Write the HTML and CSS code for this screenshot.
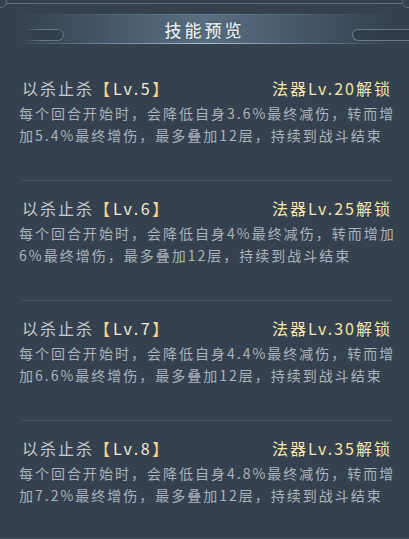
FILE: index.html
```html
<!DOCTYPE html>
<html lang="zh-CN">
<head>
<meta charset="utf-8">
<title>技能预览</title>
<link rel="stylesheet" href="styles.css">
</head>
<body>
<div class="panel">
  <div class="rim"></div>
  <div class="header">
    <span class="cap cap-left"></span>
    <h1 class="header-title">技能预览</h1>
    <span class="cap cap-right"></span>
  </div>
  <div class="skills">
    <section class="skill">
      <div class="skill-head">
        <span class="skill-name">以杀止杀<span class="bracket">【</span><span class="lv">Lv.5</span><span class="bracket">】</span></span>
        <span class="unlock">法器Lv.20解锁</span>
      </div>
      <p class="skill-desc">每个回合开始时，会降低自身3.6%最终减伤，转而增<br>加5.4%最终增伤，最多叠加12层，持续到战斗结束</p>
    </section>
    <section class="skill">
      <div class="skill-head">
        <span class="skill-name">以杀止杀<span class="bracket">【</span><span class="lv">Lv.6</span><span class="bracket">】</span></span>
        <span class="unlock">法器Lv.25解锁</span>
      </div>
      <p class="skill-desc">每个回合开始时，会降低自身4%最终减伤，转而增加<br>6%最终增伤，最多叠加12层，持续到战斗结束</p>
    </section>
    <section class="skill">
      <div class="skill-head">
        <span class="skill-name">以杀止杀<span class="bracket">【</span><span class="lv">Lv.7</span><span class="bracket">】</span></span>
        <span class="unlock">法器Lv.30解锁</span>
      </div>
      <p class="skill-desc">每个回合开始时，会降低自身4.4%最终减伤，转而增<br>加6.6%最终增伤，最多叠加12层，持续到战斗结束</p>
    </section>
    <section class="skill">
      <div class="skill-head">
        <span class="skill-name">以杀止杀<span class="bracket">【</span><span class="lv">Lv.8</span><span class="bracket">】</span></span>
        <span class="unlock">法器Lv.35解锁</span>
      </div>
      <p class="skill-desc">每个回合开始时，会降低自身4.8%最终减伤，转而增<br>加7.2%最终增伤，最多叠加12层，持续到战斗结束</p>
    </section>
  </div>
</div>
</body>
</html>
```
FILE: styles.css
```css
html, body {
  margin: 0;
  padding: 0;
}

body {
  width: 409px;
  height: 539px;
  overflow: hidden;
  background: #35414e;
  font-family: "Noto Sans CJK SC", "Noto Sans", sans-serif;
}

.panel {
  position: relative;
  height: 539px;
  box-sizing: border-box;
  padding-top: 3px;
  border-bottom: 1px solid #45525f;
}

/* thin frame line along the top with small round corner knobs */
.rim {
  height: 1px;
  margin: 0 7px;
  background: linear-gradient(to right, #627383, #56677a 50%, #627383);
}

.panel::before,
.panel::after {
  content: "";
  position: absolute;
  top: -4px;
  width: 10px;
  height: 10px;
  border: 1px solid #5f7080;
  border-radius: 50%;
}

.panel::before { left: -5px; }
.panel::after { right: -5px; }

/* title band */
.header {
  position: relative;
  margin-top: 10px;
  height: 30px;
  display: flex;
  justify-content: center;
  align-items: center;
  background:
    linear-gradient(to right,
      rgba(80, 102, 122, 0) 4%,
      rgba(80, 102, 122, 0.55) 25%,
      rgba(95, 120, 140, 0.85) 50%,
      rgba(80, 102, 122, 0.55) 75%,
      rgba(80, 102, 122, 0) 96%);
}

.header::before,
.header::after {
  content: "";
  position: absolute;
  left: 8%;
  right: 8%;
  height: 1px;
}

.header::before {
  top: 0;
  background: linear-gradient(to right, rgba(120, 145, 165, 0), rgba(120, 145, 165, 0.45) 50%, rgba(120, 145, 165, 0));
}

.header::after {
  bottom: 0;
  left: 4%;
  right: 4%;
  background: linear-gradient(to right, rgba(165, 190, 210, 0), rgba(170, 195, 215, 0.9) 50%, rgba(165, 190, 210, 0));
}

.header-title {
  margin: 0;
  padding-top: 2px;
  font-size: 17px;
  font-weight: 500;
  line-height: 28px;
  letter-spacing: 3px;
  color: #e2eaf0;
  text-shadow: 0 0 2px rgba(20, 30, 40, 0.6);
}

/* rounded end caps inside the band */
.cap {
  position: absolute;
  top: 15px;
  height: 10px;
  border: 1px solid rgba(125, 145, 160, 0.75);
  border-radius: 6px;
  background: rgba(45, 57, 69, 0.6);
}

.cap-left {
  left: 6px;
  width: 56px;
  border-left-color: transparent;
  -webkit-mask-image: linear-gradient(to right, transparent 30%, #000 65%);
  mask-image: linear-gradient(to right, transparent 30%, #000 65%);
}

.cap-right {
  left: 352px;
  width: 64px;
}

/* skill list */
.skills {
  margin-top: 17px;
  padding: 0 17px 0 22px;
}

.skill {
  padding: 15px 0 34px;
  border-top: 1px solid #4a5767;
}

.skill:first-child {
  border-top: none;
}

.skill-head {
  display: flex;
  justify-content: space-between;
  align-items: center;
  height: 24px;
  line-height: 24px;
  font-size: 16px;
}

.skill-name {
  letter-spacing: 2px;
  color: #c4c9ce;
}

.bracket {
  color: #f0d68a;
  letter-spacing: 0;
}

.lv {
  color: #f3ecd4;
  letter-spacing: 2.5px;
  padding-left: 3px;
}

.unlock {
  color: #f5e4aa;
  letter-spacing: 2px;
}

.skill-desc {
  margin: 2px 0 0 -3px;
  font-size: 14px;
  line-height: 22px;
  letter-spacing: 2px;
  white-space: nowrap;
  color: #aab3bc;
}
```
